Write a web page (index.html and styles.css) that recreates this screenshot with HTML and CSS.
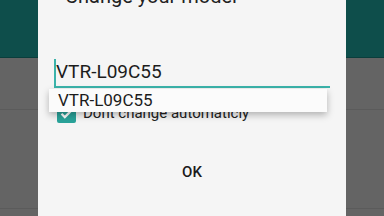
FILE: index.html
```html
<!DOCTYPE html>
<html lang="en">

<head>
    <meta charset="UTF-8">
    <meta name="viewport" content="width=device-width, initial-scale=1.0">
    <title>Change your model</title>
    <link rel="stylesheet" href="styles.css">
</head>

<body>
    <section class="screen">

        <header class="appbar"></header>
        <div class="list">
            <div class="row row-first"></div>
            <div class="row row-second"></div>
        </div>

        <div class="dialog">
            <h2 class="dialog-title">Change your model</h2>

            <div class="field">
                <span class="caret"></span>
                <span class="value">VTR-L09C55</span>
            </div>

            <label class="check">
                <span class="box">
                    <svg width="19" height="19" viewBox="0 0 19 19">
                        <path d="M4.5 9.8l3.3 3.3 6.7-6.7" fill="none" stroke="#fff" stroke-width="2.2" />
                    </svg>
                </span>
                <span class="check-text">Dont change automaticly</span>
            </label>

            <div class="actions">
                <button class="btn">OK</button>
            </div>

            <div class="suggest">VTR-L09C55</div>
        </div>

    </section>
</body>

</html>
```

FILE: styles.css
```css
:root {
    --accent: #3bb3aa;
    --check: #2aa39a;
    --appbar: #0e4e4b;
    --backdrop: #646464;
    --dialog: #f5f5f5;
}

* {
    box-sizing: border-box;
}

body {
    margin: 0;
    font-family: Roboto, "Liberation Sans", sans-serif;
}

.screen {
    position: relative;
    width: 384px;
    height: 216px;
    overflow: hidden;
    background: var(--backdrop);
}

.appbar {
    height: 58px;
    background: var(--appbar);
    border-bottom: 1px solid #0a3e3c;
}

.list .row {
    border-bottom: 1px solid #5b5b5b;
}

.row-first {
    height: 52px;
}

.row-second {
    height: 99px;
}

.dialog {
    position: absolute;
    top: 0;
    left: 38px;
    width: 308px;
    height: 216px;
    background: var(--dialog);
    overflow: hidden;
}

.dialog-title {
    margin: -16px 0 0;
    padding-left: 27px;
    font-size: 20px;
    line-height: 24px;
    font-weight: 400;
    color: #222;
}

.field {
    display: flex;
    align-items: center;
    margin: 50px 0 0 16px;
    width: 276px;
    height: 30px;
    border-bottom: 2px solid var(--accent);
}

.caret {
    width: 2px;
    height: 27px;
    background: var(--accent);
}

.value {
    font-size: 19px;
    line-height: 28px;
    color: #1c1c1c;
}

.check {
    display: flex;
    align-items: center;
    gap: 7px;
    margin: 16px 0 0 19px;
}

.box {
    width: 19px;
    height: 19px;
    border-radius: 2px;
    background: var(--check);
}

.box svg {
    display: block;
}

.check-text {
    font-size: 15px;
    line-height: 19px;
    color: #222;
}

.actions {
    display: flex;
    justify-content: center;
    margin-top: 39px;
}

.btn {
    padding: 0;
    border: none;
    background: none;
    font-family: inherit;
    font-size: 15px;
    line-height: 20px;
    font-weight: 500;
    color: #1a1a1a;
}

.suggest {
    position: absolute;
    top: 89px;
    left: 11px;
    width: 278px;
    height: 23px;
    padding-left: 9px;
    background: #fbfbfb;
    box-shadow: 0 3px 7px rgba(0, 0, 0, 0.28);
    font-size: 17px;
    line-height: 23px;
    color: #1c1c1c;
}
```
